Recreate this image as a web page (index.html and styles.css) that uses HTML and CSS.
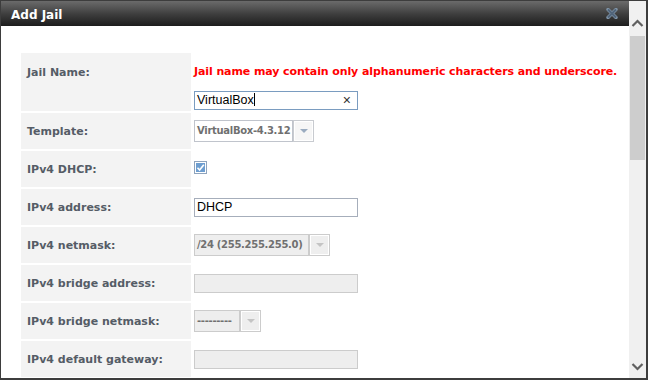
FILE: index.html
```html
<!DOCTYPE html>
<html lang="en">
<head>
    <meta charset="UTF-8">
    <title>Add Jail</title>
    <link rel="stylesheet" href="styles.css">
</head>
<body>

    <div class="window">
        <div class="main">
            <div class="titlebar">
                <span class="title">Add Jail</span>
                <svg class="close" width="12" height="11" viewBox="0 0 12 11">
                    <path d="M2 1.5 L10 9.5 M10 1.5 L2 9.5" stroke="#7f93a6" stroke-width="3.4" stroke-linecap="round"/>
                    <path d="M2 1.5 L10 9.5 M10 1.5 L2 9.5" stroke="#50647a" stroke-width="2"/>
                </svg>
            </div>

            <div class="content">
                <div class="form">
                    <div class="label top">Jail Name:</div>
                    <div class="value top">
                        <p class="error">Jail name may contain only alphanumeric characters and underscore.</p>
                        <div class="input focus">VirtualBox<span class="caret"></span><span class="clear">&times;</span></div>
                    </div>

                    <div class="label">Template:</div>
                    <div class="value">
                        <div class="select">
                            <span class="select-text w-template">VirtualBox-4.3.12</span>
                            <span class="select-btn"><i></i></span>
                        </div>
                    </div>

                    <div class="label">IPv4 DHCP:</div>
                    <div class="value">
                        <svg class="check" width="13" height="13" viewBox="0 0 13 13">
                            <rect x="0.5" y="0.5" width="12" height="12" fill="#fff" stroke="#8fa4bd"/>
                            <rect x="2" y="2" width="9" height="9" fill="#6e9ed0"/>
                            <path d="M3.5 6.8 L5.6 9 L9.8 3.8" fill="none" stroke="#fff" stroke-width="1.6"/>
                        </svg>
                    </div>

                    <div class="label">IPv4 address:</div>
                    <div class="value">
                        <div class="input">DHCP</div>
                    </div>

                    <div class="label">IPv4 netmask:</div>
                    <div class="value">
                        <div class="select disabled">
                            <span class="select-text w-netmask">/24 (255.255.255.0)</span>
                            <span class="select-btn"><i></i></span>
                        </div>
                    </div>

                    <div class="label">IPv4 bridge address:</div>
                    <div class="value">
                        <div class="input disabled"></div>
                    </div>

                    <div class="label">IPv4 bridge netmask:</div>
                    <div class="value">
                        <div class="select disabled">
                            <span class="select-text w-bridge">---------</span>
                            <span class="select-btn"><i></i></span>
                        </div>
                    </div>

                    <div class="label">IPv4 default gateway:</div>
                    <div class="value">
                        <div class="input disabled"></div>
                    </div>
                </div>
            </div>
        </div>

        <div class="scrollbar">
            <svg class="arrow" width="17" height="17" viewBox="0 0 17 17">
                <polyline points="3.5,11 8.5,6 13.5,11" fill="none" stroke="#606060" stroke-width="2.2"/>
            </svg>
            <div class="thumb"></div>
            <div class="track"></div>
            <svg class="arrow" width="17" height="17" viewBox="0 0 17 17">
                <polyline points="3.5,6 8.5,11 13.5,6" fill="none" stroke="#606060" stroke-width="2.2"/>
            </svg>
        </div>
    </div>

</body>
</html>
```

FILE: styles.css
```css
body {
    margin: 0;
    background: #3a3a3a;
    font-family: 'DejaVu Sans', Verdana, sans-serif;
}
.window {
    width: 648px;
    height: 380px;
    box-sizing: border-box;
    border-style: solid;
    border-color: #3d3d3d;
    border-width: 1px 2px 2px 1px;
    display: flex;
    background: white;
    overflow: hidden;
}
.main {
    flex: 1;
    display: flex;
    flex-direction: column;
    overflow: hidden;
}
.titlebar {
    height: 25px;
    flex-shrink: 0;
    background: linear-gradient(#6b6b6b, #3c3c3c 55%, #1d1d1d);
    display: flex;
    align-items: center;
    justify-content: space-between;
    padding: 0 11px 0 10px;
}
.title {
    color: white;
    font-weight: bold;
    font-size: 12px;
    margin-top: 2px;
}
.close {
    margin-top: -1px;
}
.content {
    padding: 27px 0 0 20px;
}
.form {
    display: grid;
    grid-template-columns: 170px auto;
    grid-template-rows: 58px repeat(7, 36px);
    row-gap: 2px;
    column-gap: 3px;
}
.label {
    background: #f3f3f3;
    color: #555c66;
    font-weight: bold;
    font-size: 11px;
    padding-left: 6px;
    display: flex;
    align-items: center;
}
.label.top {
    align-items: flex-start;
    padding-top: 13px;
}
.value {
    display: flex;
    align-items: center;
}
.value.top {
    flex-direction: column;
    align-items: flex-start;
}
.error {
    color: #ff0000;
    font-weight: bold;
    font-size: 11px;
    line-height: 14px;
    letter-spacing: -0.1px;
    margin: 12px 0 12px 0;
}
.input {
    width: 164px;
    height: 19px;
    box-sizing: border-box;
    border: 1px solid #a6aebb;
    background: white;
    font-family: 'Liberation Sans', Arial, sans-serif;
    font-size: 12.5px;
    line-height: 17px;
    padding-left: 2px;
    color: black;
    position: relative;
}
.input.focus {
    border-color: #7a9cc0;
}
.input.disabled {
    background: #eeeeee;
    border-color: #cccccc;
}
.caret {
    display: inline-block;
    width: 1px;
    height: 13px;
    background: black;
    vertical-align: -2px;
}
.clear {
    position: absolute;
    right: 6px;
    top: 0;
    font-size: 14px;
    line-height: 16px;
    color: #333;
}
.check {
    display: block;
    margin-top: -3px;
}
.select {
    display: flex;
    height: 22px;
    box-sizing: border-box;
}
.select-text {
    box-sizing: border-box;
    flex-shrink: 0;
    border: 1px solid #c0c4cc;
    background: white;
    color: #707070;
    font-weight: bold;
    font-size: 10px;
    letter-spacing: -0.3px;
    padding: 0 0 0 2px;
    line-height: 20px;
    white-space: nowrap;
}
.w-template {
    width: 99px;
}
.w-netmask {
    width: 115px;
}
.w-bridge {
    width: 46px;
}
.select.disabled .select-text {
    background: #eeeeee;
    border-color: #cccccc;
}
.select-btn {
    width: 21px;
    box-sizing: border-box;
    border: 1px solid #c8cbd0;
    background: #f6f6f6;
    box-shadow: inset 0 0 0 1px #ffffff;
    display: flex;
    align-items: center;
    justify-content: center;
}
.select.disabled .select-btn {
    background: #eeeeee;
    border-color: #cccccc;
}
.select-btn i {
    width: 0;
    height: 0;
    border-left: 4px solid transparent;
    border-right: 4px solid transparent;
    border-top: 4px solid #9aabc0;
}
.select.disabled .select-btn i {
    border-top-color: #c4c4c4;
}
.scrollbar {
    width: 17px;
    background: #f0f0f0;
    display: flex;
    flex-direction: column;
    padding-top: 14px;
    padding-bottom: 3px;
}
.arrow {
    display: block;
}
.thumb {
    height: 124px;
    margin: 4px 1px 0 1px;
    background: #cdcdcd;
}
.track {
    flex: 1;
}
```
